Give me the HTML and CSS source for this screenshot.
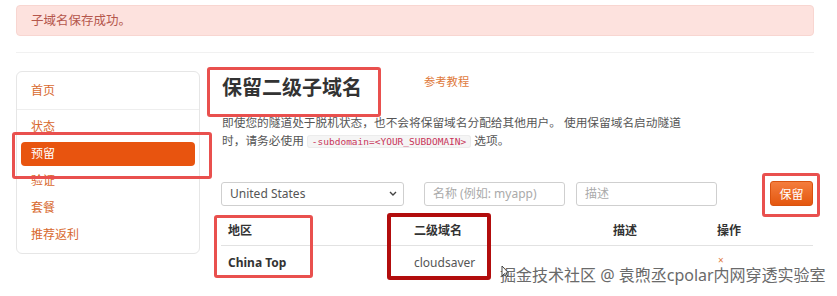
FILE: index.html
```html
<!DOCTYPE html>
<html lang="zh-CN">
<head>
  <meta charset="UTF-8">
  <meta name="viewport" content="width=device-width, initial-scale=1.0">
  <title>保留二级子域名</title>
  <link rel="stylesheet" href="styles.css">
</head>
<body>
  <div class="wrap">
    <div class="alert">子域名保存成功。</div>
    <hr class="rule">

    <div class="layout">
      <nav class="side">
        <a class="side-home" href="#">首页</a>
        <ul class="side-list">
          <li><a href="#">状态</a></li>
          <li><a class="active" href="#">预留</a></li>
          <li><a href="#">验证</a></li>
          <li><a href="#">套餐</a></li>
          <li><a href="#">推荐返利</a></li>
        </ul>
      </nav>

      <main class="content">
        <div class="title-row">
          <h2 class="title">保留二级子域名</h2>
          <a class="guide" href="#">参考教程</a>
        </div>
        <p class="desc">即使您的隧道处于脱机状态，也不会将保留域名分配给其他用户。 使用保留域名启动隧道时，请务必使用<code>-subdomain=&lt;YOUR_SUBDOMAIN&gt;</code>选项。</p>

        <form class="reserve-form">
          <select class="region">
            <option>United States</option>
            <option>China Top</option>
          </select>
          <input class="field name" type="text" placeholder="名称 (例如: myapp)">
          <input class="field note" type="text" placeholder="描述">
          <button type="button" class="btn">保留</button>
        </form>

        <table class="list">
          <thead>
            <tr>
              <th class="c-region">地区</th>
              <th class="c-sub">二级域名</th>
              <th class="c-desc">描述</th>
              <th class="c-op">操作</th>
            </tr>
          </thead>
          <tbody>
            <tr>
              <td class="strong">China Top</td>
              <td>cloudsaver</td>
              <td></td>
              <td><a class="del" href="#">×</a></td>
            </tr>
          </tbody>
        </table>
      </main>
    </div>
  </div>

  <!-- annotation boxes drawn over the screenshot -->
  <div class="mark mark-nav"></div>
  <div class="mark mark-title"></div>
  <div class="mark mark-btn"></div>
  <div class="mark mark-region"></div>
  <div class="mark dark mark-sub"></div>

  <div class="watermark">
    <svg class="cursor" width="8" height="13" viewBox="0 0 8 13"><path d="M1 1 L1 11 L3.5 8.5 L5.5 12 L6.8 11.3 L4.9 7.9 L7.5 7.9 Z" fill="#fff" stroke="#333" stroke-width="0.9"/></svg>
    掘金技术社区 @ 袁煦丞cpolar内网穿透实验室
  </div>
</body>
</html>
```

FILE: styles.css
```css
body {
  margin: 0;
  background: #fff;
  font-family: "Noto Sans", "Noto Sans CJK SC", sans-serif;
  color: #555;
  position: relative;
  width: 837px;
  height: 296px;
  overflow: hidden;
}
.wrap {
  width: 798px;
  margin-left: 16px;
  padding-top: 5px;
}
.alert {
  height: 31px;
  box-sizing: border-box;
  background: #fde2de;
  border: 1px solid #f8d6d1;
  border-radius: 4px;
  color: #b5574c;
  font-size: 12.5px;
  line-height: 29px;
  padding-left: 14px;
}
.rule {
  border: 0;
  border-top: 1px solid #f1f1f1;
  margin: 16px 0 18px;
}
.layout {
  display: flex;
  gap: 21px;
}
.side {
  width: 184px;
  height: 183px;
  box-sizing: border-box;
  border: 1px solid #e6e6e6;
  border-radius: 6px;
}
.side a {
  color: #d8692e;
  text-decoration: none;
  font-size: 12px;
}
.side-home {
  display: block;
  height: 37px;
  line-height: 37px;
  padding-left: 14px;
  border-bottom: 1px solid #eee;
}
.side-list {
  list-style: none;
  margin: 0;
  padding: 5px 4px 0;
  display: flex;
  flex-direction: column;
  gap: 3px;
}
.side-list a {
  display: block;
  height: 24px;
  line-height: 24px;
  padding-left: 10px;
  border-radius: 4px;
}
.side-list a.active {
  background: #e8540f;
  color: #fff;
}
.content {
  width: 592px;
}
.title-row {
  display: flex;
  align-items: flex-start;
  gap: 62px;
  margin-top: 5px;
}
.title {
  margin: 0 0 0 1px;
  font-size: 20px;
  line-height: 24px;
  font-weight: bold;
  color: #333;
}
.guide {
  color: #e07a3c;
  text-decoration: none;
  font-size: 11.3px;
  line-height: 18px;
  margin-top: -3px;
}
.desc {
  margin: 13px 0 0 1px;
  max-width: 462px;
  font-size: 11.7px;
  line-height: 18.3px;
  color: #555;
}
.desc code {
  font-family: "DejaVu Sans Mono", monospace;
  font-size: 9.5px;
  color: #c9365a;
  background: #f5f5f5;
  border: 1px solid #ececec;
  border-radius: 3px;
  padding: 0 4px;
  margin: 0 3px;
}
.reserve-form {
  display: flex;
  align-items: center;
  margin-top: 30px;
  height: 24px;
}
.region, .field {
  height: 24px;
  box-sizing: border-box;
  border: 1px solid #cfcfcf;
  border-radius: 3px;
  font-family: inherit;
  font-size: 12px;
  color: #555;
  background-color: #fff;
}
.region {
  width: 183px;
  margin-right: 20px;
  padding: 0 8px;
  appearance: none;
  background-image: url("data:image/svg+xml;utf8,<svg xmlns='http://www.w3.org/2000/svg' width='8' height='5' viewBox='0 0 8 5'><path d='M1 1 L4 4 L7 1' fill='none' stroke='%23444' stroke-width='1.4'/></svg>");
  background-repeat: no-repeat;
  background-position: right 6px center;
}
.field {
  width: 141px;
  padding: 0 8px;
}
.field::placeholder {
  color: #aaa;
}
.field.name {
  margin-right: 11px;
}
.btn {
  margin-left: auto;
  width: 43px;
  height: 25px;
  border: 1px solid #d9520f;
  border-radius: 3px;
  background: linear-gradient(#f47d3d, #e4570f);
  color: #fff;
  font-family: inherit;
  font-size: 12px;
  padding: 0;
}
.list {
  width: 592px;
  border-collapse: collapse;
  margin-top: 9px;
  font-size: 12px;
  table-layout: fixed;
}
.list th, .list td {
  text-align: left;
  padding: 0 7px;
}
.list th {
  height: 30px;
  color: #333;
  font-weight: bold;
  border-bottom: 1px solid #e2e2e2;
}
.list td {
  height: 34px;
}
.c-region { width: 172px; }
.c-sub { width: 185px; }
.c-desc { width: 90px; }
.list td.strong {
  font-weight: bold;
  color: #333;
}
.del {
  display: inline-block;
  color: #e07a3c;
  text-decoration: none;
  font-size: 10px;
  margin-left: 1px;
  transform: translateY(-3px);
}
.mark {
  position: absolute;
  box-sizing: border-box;
  border: 3.5px solid #e9504e;
  border-radius: 3px;
}
.mark.dark {
  border-color: #b20d0d;
  border-width: 4px;
}
.mark-nav { left: 12px; top: 132px; width: 200px; height: 47px; }
.mark-title { left: 207px; top: 67px; width: 174px; height: 50px; }
.mark-btn { left: 762px; top: 173px; width: 58px; height: 44px; }
.mark-region { left: 214px; top: 215px; width: 99px; height: 63px; }
.mark-sub { left: 387px; top: 213px; width: 104px; height: 67px; }
.watermark {
  position: absolute;
  left: 500px;
  top: 264px;
  font-size: 16px;
  line-height: 22px;
  color: #6a6a6a;
  text-shadow: 0 0 2px #fff, 0 0 2px #fff;
  white-space: nowrap;
}
.cursor {
  position: absolute;
  left: 1px;
  top: 1px;
}
```
